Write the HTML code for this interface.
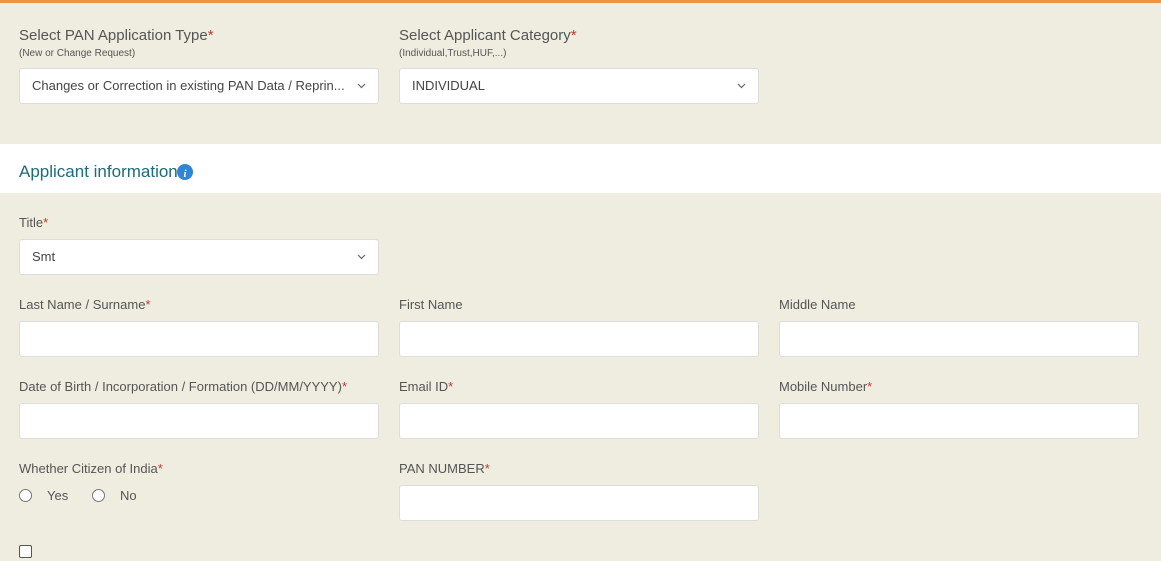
<!DOCTYPE html>
<html><head><style>
*{margin:0;padding:0;box-sizing:border-box}
body{width:1161px;height:561px;overflow:hidden;background:#efede0;font-family:"Liberation Sans",sans-serif;position:relative;color:#555}
.top{position:absolute;left:0;top:0;width:1161px;height:3px;background:#ea9444}
.lbl{position:absolute;font-size:13px;color:#555}
.lbl b{color:#c0392b;font-weight:normal}
.big{font-size:15px}
.sub{position:absolute;font-size:10px;color:#555}
.in{position:absolute;width:360px;height:36px;background:#fff;border:1px solid #ddd;border-radius:3px;font-size:13px;color:#444;padding:10px 12px;line-height:14px}
.in svg{position:absolute;right:12px;top:14px}
.band{position:absolute;left:0;top:144px;width:1161px;height:49px;background:#fff}
.band span{position:absolute;left:19px;top:162px}
.rad{position:absolute;width:13px;height:13px;border:1px solid #777;border-radius:50%;background:#fff}
.cb{position:absolute;left:19px;top:545px;width:13px;height:13px;border:1px solid #555;border-radius:2px;background:#fff}
</style></head><body>
<div class="top"></div>
<div class="lbl big" style="left:19px;top:27px">Select PAN Application Type<b>*</b></div>
<div class="sub" style="left:19px;top:48px">(New or Change Request)</div>
<div class="in" style="left:19px;top:68px">Changes or Correction in existing PAN Data / Reprin...<svg width="9" height="6"><path d="M1 1l3.5 3.5L8 1" stroke="#666" fill="none" stroke-width="1.2"/></svg></div>
<div class="lbl big" style="left:399px;top:27px">Select Applicant Category<b>*</b></div>
<div class="sub" style="left:399px;top:48px">(Individual,Trust,HUF,...)</div>
<div class="in" style="left:399px;top:68px">INDIVIDUAL<svg width="9" height="6"><path d="M1 1l3.5 3.5L8 1" stroke="#666" fill="none" stroke-width="1.2"/></svg></div>
<div class="band"></div>
<div style="position:absolute;left:19px;top:162px;font-size:17px;color:#1d6b7b">Applicant information</div>
<svg style="position:absolute;left:177px;top:164px" width="16" height="16"><circle cx="8" cy="8" r="8" fill="#2f86d6"/><text x="8" y="13" font-size="11" font-style="italic" font-weight="bold" fill="#fff" text-anchor="middle" font-family="Liberation Serif">i</text></svg>
<div class="lbl" style="left:19px;top:215px">Title<b>*</b></div>
<div class="in" style="left:19px;top:239px">Smt<svg width="9" height="6"><path d="M1 1l3.5 3.5L8 1" stroke="#666" fill="none" stroke-width="1.2"/></svg></div>
<div class="lbl" style="left:19px;top:297px">Last Name / Surname<b>*</b></div>
<div class="lbl" style="left:399px;top:297px">First Name</div>
<div class="lbl" style="left:779px;top:297px">Middle Name</div>
<div class="in" style="left:19px;top:321px"></div>
<div class="in" style="left:399px;top:321px"></div>
<div class="in" style="left:779px;top:321px"></div>
<div class="lbl" style="left:19px;top:379px">Date of Birth / Incorporation / Formation (DD/MM/YYYY)<b>*</b></div>
<div class="lbl" style="left:399px;top:379px">Email ID<b>*</b></div>
<div class="lbl" style="left:779px;top:379px">Mobile Number<b>*</b></div>
<div class="in" style="left:19px;top:403px"></div>
<div class="in" style="left:399px;top:403px"></div>
<div class="in" style="left:779px;top:403px"></div>
<div class="lbl" style="left:19px;top:461px">Whether Citizen of India<b>*</b></div>
<div class="rad" style="left:19px;top:489px"></div>
<div class="lbl" style="left:47px;top:488px">Yes</div>
<div class="rad" style="left:92px;top:489px"></div>
<div class="lbl" style="left:120px;top:488px">No</div>
<div class="lbl" style="left:399px;top:461px">PAN NUMBER<b>*</b></div>
<div class="in" style="left:399px;top:485px"></div>
<div class="cb"></div>
</body></html>
